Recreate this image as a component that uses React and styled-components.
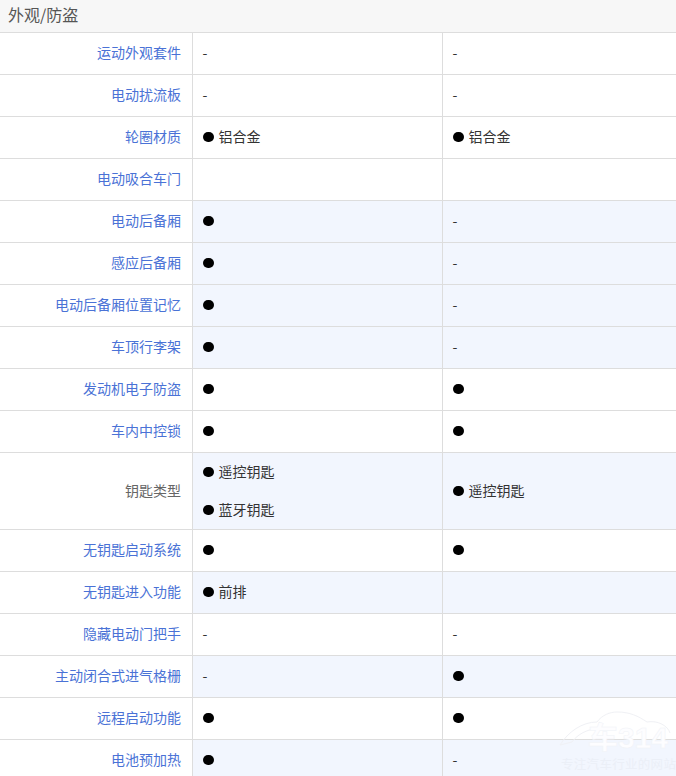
import React from "react";
import styled, { createGlobalStyle } from "styled-components";

const Global = createGlobalStyle`
  html, body { margin: 0; padding: 0; height: 776px; overflow: hidden; background: #fff; }
  body { font-family: "Noto Sans CJK SC", "Noto Sans", sans-serif; font-size: 14px; color: #333; }
  * { box-sizing: border-box; }
`;
const Page = styled.div`position: relative; width: 676px; height: 776px; overflow: hidden;`;
const Header = styled.div`
  height: 33px; background: #f7f7f7; border-bottom: 1px solid #ddd;
  padding: 0 0 5px 8px; display: flex; align-items: center;
  font-size: 16px; color: #555;
`;
const Row = styled.div`
  display: grid; grid-template-columns: 192px 250px 234px;
  height: ${p => p.$h || 42}px;
`;
const Label = styled.div`
  display: flex; align-items: center; justify-content: flex-end;
  padding: 0 11px 3px 0; border-bottom: 1px solid #ddd;
  color: ${p => (p.$plain ? "#666" : "#4a72d6")};
`;
const Cell = styled.div`
  display: flex; flex-direction: column; justify-content: center; gap: 19px;
  padding: ${p => (p.$tall ? 1 : 0)}px 0 0 10px;
  border-left: 1px solid #ddd; border-bottom: 1px solid #ddd;
  background: ${p => (p.$hl ? "#f2f6fe" : "#fff")}; color: #333;
`;
const Item = styled.div`display: flex; align-items: center; height: 19px; gap: 5px;`;
const Dot = styled.span`
  width: 10.5px; height: 10.5px; border-radius: 50%; background: #000; flex: none; margin-top: -1px;
`;
const ItemText = styled.span`margin-bottom: 3px;`;
const Dash = styled.span`display: block; line-height: 19px; margin: 0 0 2px -0.5px;`;
const Mark = styled.div`
  position: absolute; left: 558px; top: 710px; width: 118px; height: 66px; pointer-events: none;
`;
const MarkSvg = styled.svg`position: absolute; left: 0; top: 0;`;
const MarkNum = styled.span`
  position: absolute; left: 30px; top: 14px; font: 700 30px/28px "Liberation Sans", "Noto Sans CJK SC", sans-serif;
  color: #fdfdff; -webkit-text-stroke: 0.5px #f1f3f7; white-space: nowrap;
`;
const MarkText = styled.span`
  position: absolute; left: 3px; top: 48px; font: 12.5px/14px "Liberation Sans", "Noto Sans CJK SC", sans-serif;
  letter-spacing: 0.3px; color: #ebeff7; white-space: nowrap;
`;

const C = ({ v, hl, tall }) => (
  <Cell $hl={hl} $tall={tall}>
    {v === "-" && <Dash>-</Dash>}
    {Array.isArray(v) && v.map((t, i) => (
      <Item key={i}><Dot />{t && <ItemText>{t}</ItemText>}</Item>
    ))}
  </Cell>
);

const rows = [
  ["运动外观套件", "-", "-"],
  ["电动扰流板", "-", "-"],
  ["轮圈材质", ["铝合金"], ["铝合金"]],
  ["电动吸合车门", "", ""],
  ["电动后备厢", [""], "-", 1],
  ["感应后备厢", [""], "-", 1],
  ["电动后备厢位置记忆", [""], "-", 1],
  ["车顶行李架", [""], "-", 1],
  ["发动机电子防盗", [""], [""]],
  ["车内中控锁", [""], [""]],
  ["钥匙类型", ["遥控钥匙", "蓝牙钥匙"], ["遥控钥匙"], 1, 77, true],
  ["无钥匙启动系统", [""], [""]],
  ["无钥匙进入功能", ["前排"], "", 1],
  ["隐藏电动门把手", "-", "-"],
  ["主动闭合式进气格栅", "-", [""], 1],
  ["远程启动功能", [""], [""]],
  ["电池预加热", [""], "-", 1],
];

export default function App() {
  return (
    <Page>
      <Global />
      <Header>外观/防盗</Header>
      {rows.map(([l, a, b, hl, h, plain]) => (
        <Row key={l} $h={h}>
          <Label $plain={plain}>{l}</Label>
          <C v={a} hl={hl} tall={plain} />
          <C v={b} hl={hl} tall={plain} />
        </Row>
      ))}
      <Mark>
        <MarkSvg width="118" height="66" viewBox="0 0 118 66" fill="none" stroke="#f0f1f5" strokeWidth="1">
          <path d="M2 35 C10 22 24 12 39 12 C44 5 52 2 59 2 C72 2 80 6 89 12 C100 10 110 16 112 23" />
          <path d="M2 35 L14 32 C20 24 28 20 40 18" />
        </MarkSvg>
        <MarkNum>车314</MarkNum>
        <MarkText>专注汽车行业的网站</MarkText>
      </Mark>
    </Page>
  );
}
